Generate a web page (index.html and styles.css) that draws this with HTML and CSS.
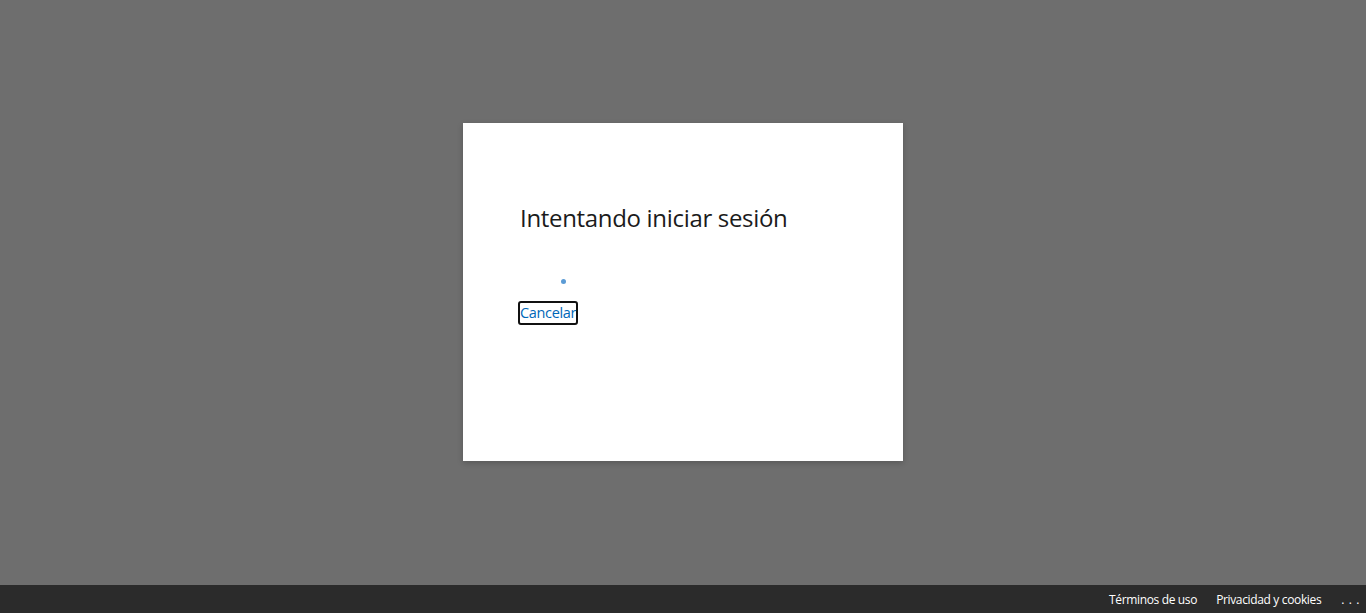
FILE: index.html
```html
<!DOCTYPE html>
<html lang="es">
<head>
<meta charset="utf-8">
<title>Iniciar sesión</title>
<link rel="stylesheet" href="styles.css">
</head>
<body>
<div class="page">
  <main class="stage">
    <section class="card">
      <h1 class="title">Intentando iniciar sesión</h1>
      <div class="progress"><span class="dot"></span></div>
      <a class="cancel" href="#">Cancelar</a>
    </section>
  </main>
  <footer class="footer">
    <a href="#" class="flink">Términos de uso</a>
    <a href="#" class="flink">Privacidad y cookies</a>
    <a href="#" class="flink more">. . .</a>
  </footer>
</div>
</body>
</html>
```

FILE: styles.css
```css
html, body {
  margin: 0;
  padding: 0;
  height: 100%;
}
body {
  background: #6e6e6e;
  font-family: "Open Sans", "Noto Sans", "Liberation Sans", sans-serif;
}
.page {
  display: flex;
  flex-direction: column;
  height: 100vh;
}
.stage {
  flex: 1;
  display: flex;
  align-items: center;
  justify-content: center;
}
.card {
  box-sizing: border-box;
  width: 440px;
  height: 338px;
  background: #fff;
  box-shadow: 0 2px 6px rgba(0, 0, 0, 0.2);
  padding: 78px 56px 0 57px;
  margin-bottom: 1px;
}
.title {
  margin: 0;
  font-size: 24px;
  font-weight: 400;
  line-height: 34px;
  color: #1b1b1b;
  letter-spacing: -0.32px;
}
.progress {
  height: 22px;
  margin-top: 44px;
  position: relative;
}
.dot {
  position: absolute;
  left: 41px;
  top: 0;
  width: 5px;
  height: 5px;
  border-radius: 50%;
  background: #5b9bd5;
}
.cancel {
  display: inline-block;
  margin-left: -2px;
  border: 2px solid #111;
  border-radius: 3px;
  padding: 0;
  font-size: 14.5px;
  line-height: 20px;
  color: #0067b8;
  text-decoration: none;
  letter-spacing: -0.35px;
}
.footer {
  height: 28px;
  background: #2b2b2b;
  display: flex;
  justify-content: flex-end;
  align-items: center;
  padding-right: 6px;
}
.flink {
  color: #fff;
  font-size: 12px;
  text-decoration: none;
  margin-left: 19px;
  letter-spacing: -0.35px;
}
.more {
  letter-spacing: 0.6px;
  font-size: 12px;
  margin-left: 20px;
}
```
